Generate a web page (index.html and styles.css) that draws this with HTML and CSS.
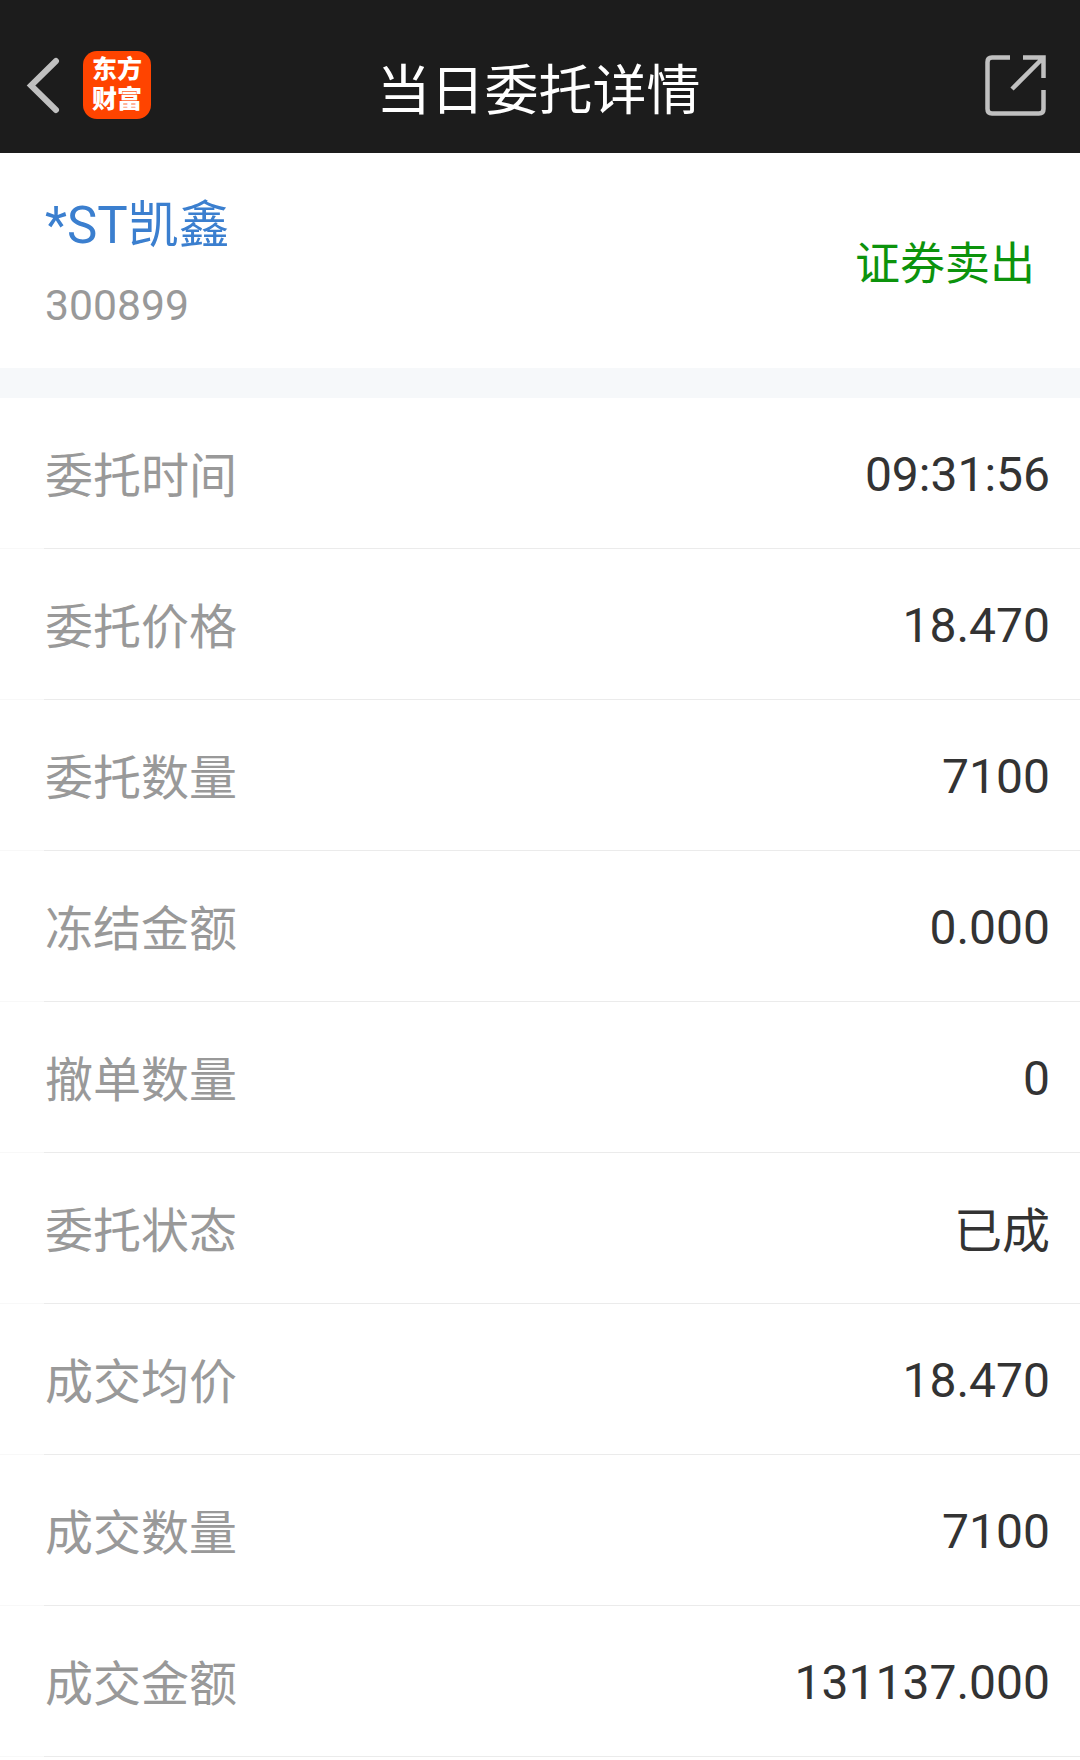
FILE: index.html
```html
<!DOCTYPE html>
<html lang="zh-CN">

<head>
    <meta charset="UTF-8">
    <meta name="viewport" content="width=device-width, initial-scale=1.0">
    <title>当日委托详情</title>
    <link rel="stylesheet" href="styles.css">
</head>

<body>
    <header class="navbar">
        <div class="nav-left">
            <svg class="back" width="36" height="58" viewBox="0 0 36 58">
                <path d="M30 5 L5 29.5 L30 54" />
            </svg>
            <div class="logo">
                <span>东方</span>
                <span>财富</span>
            </div>
        </div>
        <h1>当日委托详情</h1>
        <svg class="share" width="64" height="64" viewBox="0 0 64 64">
            <path d="M26 4.5 H8 Q3.5 4.5 3.5 9 V56 Q3.5 60.5 8 60.5 H55 Q59.5 60.5 59.5 56 V37" />
            <path d="M39 4.5 H59.5 V25 M59 5 L28 36" />
        </svg>
    </header>
    <section class="stock">
        <div>
            <div class="stock-name">*ST凯鑫</div>
            <div class="stock-code">300899</div>
        </div>
        <div class="direction">证券卖出</div>
    </section>
    <ul class="details">
        <li><span>委托时间</span><b>09:31:56</b></li>
        <li><span>委托价格</span><b>18.470</b></li>
        <li><span>委托数量</span><b>7100</b></li>
        <li><span>冻结金额</span><b>0.000</b></li>
        <li><span>撤单数量</span><b>0</b></li>
        <li><span>委托状态</span><b class="text">已成</b></li>
        <li><span>成交均价</span><b>18.470</b></li>
        <li><span>成交数量</span><b>7100</b></li>
        <li><span>成交金额</span><b>131137.000</b></li>
    </ul>
</body>

</html>
```
FILE: styles.css
```css
* {
    box-sizing: border-box;
}

body {
    margin: 0;
    background: #fff;
    font-family: Roboto, "Noto Sans CJK SC", sans-serif;
    overflow: hidden;
}

.navbar {
    display: grid;
    grid-template-columns: 1fr auto 1fr;
    align-items: center;
    height: 153px;
    padding: 17px 32px 0 26px;
    background: #1c1c1c;
}

.nav-left {
    display: flex;
    align-items: center;
    gap: 21px;
}

.navbar svg {
    fill: none;
    stroke: #c0c0c0;
    stroke-width: 4.5;
}

.navbar .back {
    stroke-width: 6;
    stroke-linecap: round;
}

.logo {
    display: flex;
    flex-direction: column;
    align-items: center;
    justify-content: center;
    width: 68px;
    height: 68px;
    border-radius: 14px;
    background: #ff4400;
    color: #fff;
    font-size: 25px;
    font-weight: 900;
    line-height: 30px;
}

h1 {
    margin: 0;
    padding: 14px 0 0 3px;
    color: #fff;
    font-size: 54px;
    font-weight: 400;
    line-height: 80px;
}

.share {
    justify-self: end;
}

.stock {
    display: flex;
    align-items: center;
    justify-content: space-between;
    height: 245px;
    padding: 5px 45px 0;
    border-bottom: 30px solid #f6f8fa;
}

.stock-name {
    color: #3b7fcf;
    font-size: 51px;
    line-height: 84px;
}

.stock-code {
    color: #999;
    font-size: 42.7px;
    line-height: 74px;
}

.direction {
    color: #0c930c;
    font-size: 45px;
    padding-bottom: 5px;
}

.details {
    margin: 0;
    padding: 0;
    list-style: none;
}

.details li {
    display: flex;
    align-items: center;
    justify-content: space-between;
    height: 151px;
    padding: 0 30px 0 45px;
    border-bottom: 1px solid;
    border-image: linear-gradient(to right, #f8f8f8 45px, #ebebeb 45px) 1;
    font-size: 48px;
}

.details span {
    padding-bottom: 3px;
    color: #999;
}

.details b {
    padding-top: 2px;
    color: #333;
    font-weight: 400;
}

.details .text {
    padding: 0 0 3px;
}
```
